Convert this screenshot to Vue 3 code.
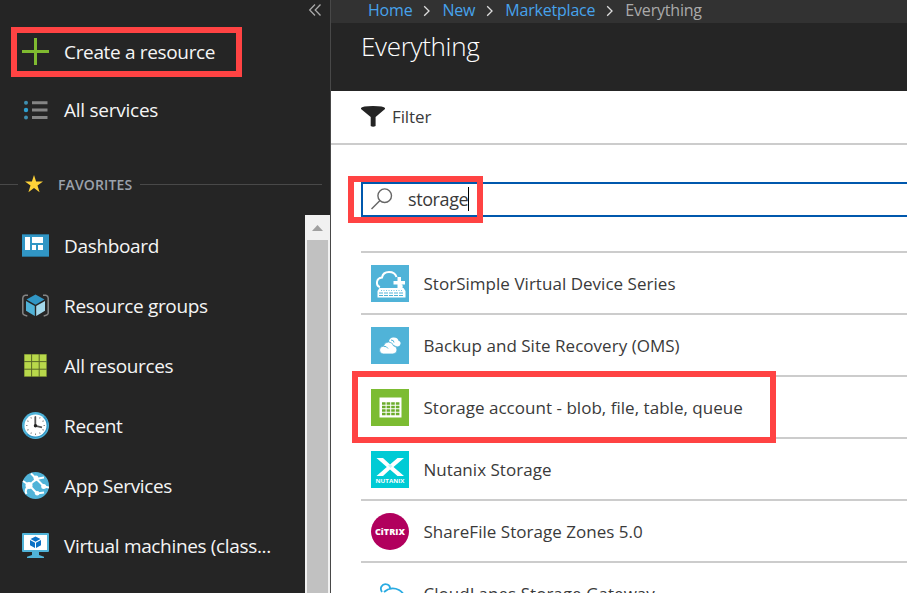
<script setup>
const favorites = [
  { id: 'dashboard', label: 'Dashboard' },
  { id: 'groups', label: 'Resource groups' },
  { id: 'resources', label: 'All resources' },
  { id: 'recent', label: 'Recent' },
  { id: 'apps', label: 'App Services' },
  { id: 'vm', label: 'Virtual machines (class...' },
]
const crumbs = ['Home', 'New', 'Marketplace']
const results = [
  { id: 'storsimple', label: 'StorSimple Virtual Device Series' },
  { id: 'backup', label: 'Backup and Site Recovery (OMS)' },
  { id: 'storage', label: 'Storage account - blob, file, table, queue', marked: true },
  { id: 'nutanix', label: 'Nutanix Storage' },
  { id: 'citrix', label: 'ShareFile Storage Zones 5.0' },
  { id: 'cloudlanes', label: 'CloudLanes Storage Gateway' },
]
const cells = [0, 1, 2, 3, 4, 5, 6, 7, 8]
const ticks = [0, 30, 60, 90, 120, 150, 180, 210, 240, 270, 300, 330]
</script>

<template>
  <div class="portal">
    <aside class="sidebar">
      <svg class="collapse" width="14" height="14" viewBox="0 0 14 14"><path d="M7 1.5 1.7 7 7 12.5M12.5 1.5 7.2 7l5.3 5.5" fill="none" stroke="#aaa" stroke-width="1.3" /></svg>
      <div class="nav-item create">
        <svg width="27" height="27" viewBox="0 0 27 27"><path d="M13.5 0v27M0 13.5h27" stroke="#7fba30" stroke-width="3" /></svg>
        <span>Create a resource</span>
        <i class="highlight"></i>
      </div>
      <div class="nav-item services">
        <svg width="27" height="20" viewBox="0 0 27 20">
          <g fill="#3f8fb0"><circle cx="4" cy="2.7" r="2" /><circle cx="4" cy="10" r="2.2" fill="#2fa0d0" /><circle cx="4" cy="17.4" r="2" /></g>
          <path d="M10 2.7h15.5M10 10h15.5M10 17.4h15.5" stroke="#858585" stroke-width="3" />
        </svg>
        <span>All services</span>
      </div>
      <div class="favorites">
        <i class="rule short"></i>
        <svg width="18" height="18" viewBox="0 0 18 18"><path d="M9 0l2.1 6.4H18l-5.5 4.1 2.1 6.7L9 13.1l-5.6 4.1 2.1-6.7L0 6.4h6.9z" fill="#ffd338" /></svg>
        <b>FAVORITES</b>
        <i class="rule"></i>
      </div>
      <div class="fav-area">
        <nav class="fav-list">
          <div v-for="f in favorites" :key="f.id" class="nav-item">
            <svg v-if="f.id === 'dashboard'" width="27" height="27" viewBox="0 0 27 27">
              <path d="M0 2h27v23H0z" fill="#3196c5" /><path d="M0 2.5h27M0 24.500h27" stroke="#286f91" />
              <path d="M3 5h5v13H3zM10 5h11v6H10zM10 13h4v5h-4zM16 13h5v5h-5z" fill="#fff" />
            </svg>
            <svg v-else-if="f.id === 'groups'" width="27" height="27" viewBox="0 0 27 27">
              <path d="M6 3.2H3.200Q.8 4 .8 6v15q0 2 4.500 3M21 3.200h2.800Q26.200 4 26.200 6v15q0 2-4.500 3" fill="none" stroke="#858585" stroke-width="1.500" />
              <path d="M13.500 2.500 22.500 7.600 13.500 12.700 4.500 7.600z" fill="#3196c5" /><path d="M4 9l8.800 5v10L4 18.800z" fill="#50b3d8" /><path d="M23 9l-8.800 5v10L23 18.800z" fill="#a3d8eb" />
            </svg>
            <svg v-else-if="f.id === 'resources'" width="27" height="27" viewBox="0 0 27 27">
              <path d="M2 2h23v23H2z" fill="#596827" />
              <rect v-for="c in cells" :key="c" :x="2.500 + (c % 3) * 7.600" :y="2.500 + Math.floor(c / 3) * 7.600" width="6.600" height="6.600" fill="#b8d84b" />
            </svg>
            <svg v-else-if="f.id === 'recent'" width="27" height="27" viewBox="0 0 27 27">
              <circle cx="13.500" cy="13.500" r="13.500" fill="#50b3d8" /><path d="M23 4a13.500 13.500 0 0 1-19 19z" fill="#3196c5" /><circle cx="13.500" cy="13.500" r="11" fill="#fff" />
              <path v-for="t in ticks" :key="t" d="M13.500 4v1.500" stroke="#888" stroke-width="1" :transform="`rotate(${t} 13.5 13.5)`" />
              <path d="M13.300 4.500v9.300l6.700 1.600" fill="none" stroke="#555" stroke-width="1.800" /><circle cx="13.500" cy="13.800" r="1.700" fill="#222" />
            </svg>
            <svg v-else-if="f.id === 'apps'" width="27" height="27" viewBox="0 0 27 27">
              <circle cx="13.500" cy="13.500" r="13.500" fill="#50b3d8" />
              <path d="M9 1.500 22 14.500M22 5.500Q13 6 7.500 13.500M7.500 13.500Q2 17 4.500 22M7.500 13.500 15 21.500 22 20.500M22 14.500l5 1M1 9l6.500 4.500" fill="none" stroke="#fff" stroke-width="2" />
              <circle cx="14" cy="6" r="2.500" fill="#fff" /><circle cx="7" cy="13.500" r="3.500" fill="#fff" /><circle cx="21.700" cy="14.500" r="2.500" fill="#fff" /><circle cx="15.200" cy="21.300" r="2.300" fill="#fff" />
            </svg>
            <svg v-else width="27" height="27" viewBox="0 0 27 27">
              <path d="M1 1h25q1 0 1 1v17q0 1-1 1H17v3l5 1.800V26H5v-1.200L10 23v-3H1q-1 0-1-1V2Q0 1 1 1z" fill="#50b3d8" /><path d="M2 3h23v15H2z" fill="#fff" />
              <path d="M13.500 4.500 18.500 7 13.500 9.700 8.500 7zM8 8l5 2.700V16l-5-2.700zM19 8l-5 2.700V16l5-2.700z" fill="#0d72c5" />
            </svg>
            <span>{{ f.label }}</span>
          </div>
        </nav>
        <div class="scrollbar">
          <svg width="25" height="25" viewBox="0 0 25 25"><path d="M12.500 10l5.500 6H7z" fill="#a0a0a0" /></svg>
          <div class="thumb"></div>
        </div>
      </div>
    </aside>

    <main class="blade">
      <div class="crumbs">
        <template v-for="c in crumbs" :key="c">
          <a>{{ c }}</a>
          <svg width="8" height="12" viewBox="0 0 8 12"><path d="M1.200 1.300 6 6 1.200 10.700" fill="none" stroke="#ddd" stroke-width="1.300" /></svg>
        </template>
        <span>Everything</span>
      </div>
      <header><h1>Everything</h1></header>
      <div class="toolbar">
        <svg width="24" height="21" viewBox="0 0 24 21"><path d="M0 2Q1 0 12 0t12 2v1L14.600 11v9Q12 21.500 9.700 20v-9L0 3z" fill="#242424" /></svg>
        <span>Filter</span>
      </div>
      <div class="search">
        <svg width="24" height="24" viewBox="0 0 24 24"><circle cx="14.700" cy="8.700" r="6.800" fill="none" stroke="#666" stroke-width="1.400" /><path d="M10 13.500 1.500 22" stroke="#666" stroke-width="1.500" /></svg>
        <span>storage</span><i class="caret"></i>
        <i class="highlight"></i>
      </div>
      <div class="results">
        <div v-for="r in results" :key="r.id" class="result">
          <svg v-if="r.id === 'storsimple'" width="38" height="37" viewBox="0 0 38 37">
            <path d="M0 0h38v37H0z" fill="#50b3d8" />
            <path d="M9 22Q5.500 21 6 17q.5-4 5-4.500Q12 7 18 7q6 0 7.500 5M30 19.500q2 3-1 4.500" fill="none" stroke="#fff" stroke-width="2" />
            <path d="M26.500 12h3.500v4h4v3.500h-4v4h-3.500v-4h-4V16h4z" fill="#fff" /><path d="M8.500 23h24l2 3v6.500h-28V26z" fill="#fff" />
            <path d="M8 28h25M8 30.500h25" stroke="#50b3d8" stroke-width="1" stroke-dasharray="4 1" /><path d="M10 25.500h21" stroke="#50b3d8" stroke-width=".8" stroke-dasharray="1 1.500" />
          </svg>
          <svg v-else-if="r.id === 'backup'" width="38" height="37" viewBox="0 0 38 37">
            <path d="M0 0h38v37H0z" fill="#50b3d8" />
            <path d="M18 14q1-4 5-3.500 3.500 0 4.500 3.200 2.500.8 2 3.300-.7 2.700-3.500 2.500L20 17z" fill="#fff" />
            <path d="M12 27q-3.500-.5-3.500-4t4-4q1-4 5-4t5.200 4q3.300 0 3.300 4 0 3.500-4 4z" fill="#fff" stroke="#50b3d8" stroke-width=".8" />
            <path d="M12.500 19.500q3-.8 4.500 2M20 13q3 0 3 2.500" fill="none" stroke="#50b3d8" />
          </svg>
          <svg v-else-if="r.id === 'storage'" width="38" height="37" viewBox="0 0 38 37">
            <path d="M0 0h38v37H0z" fill="#7cbc32" /><path d="M8.500 8.500h22v20h-22z" fill="#fff" />
            <path d="M11 14.500h18M11 18h18M11 21.500h18M11 25h18" stroke="#6cac2b" stroke-width="2.500" stroke-dasharray="3.600 1" />
          </svg>
          <svg v-else-if="r.id === 'nutanix'" width="38" height="37" viewBox="0 0 38 37">
            <path d="M0 0h38v37H0z" fill="#00cbd5" />
            <path d="M5.500 7h6.500L19 13.500 26.500 7H33L22.500 16 33 25h-6.500L19 18.500 12 25H5.500L15.800 16z" fill="#fff" />
            <path d="M17 14.500l2-1.500 2.500 2-2 2z" fill="#c9f5f7" />
            <text x="19" y="31.500" text-anchor="middle" textLength="29" lengthAdjust="spacingAndGlyphs" class="nutanix-text">NUTANIX</text>
          </svg>
          <svg v-else-if="r.id === 'citrix'" width="38" height="37" viewBox="0 0 38 37">
            <ellipse cx="19" cy="18.500" rx="19" ry="18.500" fill="#b1005d" />
            <text x="19" y="21.700" text-anchor="middle" textLength="30" lengthAdjust="spacingAndGlyphs" class="citrix-text">CiTRIX</text>
          </svg>
          <svg v-else width="38" height="37" viewBox="0 0 38 37">
            <path d="M11 17q-2-3-.5-5.500 2-3.500 6-2 3 1.300 2.500 5M13 17q7-6 15-2 7 4 5 12" fill="none" stroke="#29abe2" stroke-width="1.800" />
          </svg>
          <span>{{ r.label }}</span>
          <i v-if="r.marked" class="highlight"></i>
        </div>
      </div>
    </main>
  </div>
</template>

<style>
body { margin: 0; overflow: hidden; }
</style>

<style scoped>
.portal { display: flex; width: 907px; height: 593px; overflow: hidden; font-family: "Open Sans", "Noto Sans", sans-serif; background: #fff; }
.portal * { box-sizing: border-box; }
svg { display: block; flex: none; }
.sidebar { display: flex; flex-direction: column; flex: none; width: 331px; background: #252525; border-right: 1px solid #484848; color: #f5f5f5; }
.collapse { margin: 3px 0 0 308px; }
.nav-item { display: flex; align-items: center; gap: 15px; height: 60px; padding-left: 22px; font-size: 19px; letter-spacing: -0.34px; white-space: nowrap; }
.nav-item span { padding-top: 2px; }
.highlight { position: absolute; border: 6px solid #ff4343; }
.create { position: relative; margin-top: 10px; height: 48px; }
.create .highlight { left: 11px; top: 0; width: 231px; height: 50px; }
.services { margin-top: 5px; }
.services span { padding-top: 0; letter-spacing: -0.25px; }
.favorites { display: flex; align-items: center; height: 22px; margin-top: 33px; }
.favorites b { margin: 0 8px 0 15px; color: #9ba1ab; font-size: 14px; font-weight: 600; letter-spacing: 0.13px; }
.rule { flex: none; width: 182px; height: 1px; background: #494949; }
.rule.short { width: 18px; margin-right: 7px; }
.fav-area { display: flex; flex: 1; min-height: 0; margin-top: 20px; }
.fav-list { flex: 1; }
.scrollbar { display: flex; flex-direction: column; width: 25px; background: #f1f1f1; }
.thumb { flex: 1; margin: 0 2px; background: #c1c1c1; }
.blade { flex: 1; min-width: 0; background: #fff; color: #3a3a3a; }
.crumbs { display: flex; align-items: center; height: 23px; padding: 0 0 2px 37px; gap: 11px; background: #323232; color: #aaa; font-size: 16px; line-height: 21px; letter-spacing: -0.2px; }
.crumbs a { color: #47a3ec; }
header { height: 68px; padding: 3px 0 0 30px; background: #252525; }
h1 { margin: 0; color: #fff; font-size: 26px; font-weight: 300; line-height: 40px; letter-spacing: -0.3px; }
.toolbar { display: flex; align-items: center; gap: 7px; height: 54px; padding: 0 0 1px 30px; border-bottom: 2px solid #ccc; font-size: 17px; }
.toolbar span { letter-spacing: -0.1px; }
.search { position: relative; display: flex; align-items: center; height: 35px; margin: 37px 0 0 30px; padding: 0 0 2px 7px; border: 2px solid #0058ad; border-right: 0; font-size: 18px; letter-spacing: -0.4px; }
.search span { margin-left: 14px; }
.caret { width: 1px; height: 24px; background: #000; }
.search .highlight { left: -15px; top: -8px; width: 135px; height: 47px; }
.results { margin: 34px 0 0 30px; }
.result { position: relative; display: flex; align-items: center; gap: 14.500px; height: 62px; padding: 1px 0 0 10px; border-top: 2px solid #ccc; font-size: 17px; letter-spacing: 0.03px; white-space: nowrap; }
.result .highlight { z-index: 1; left: -9px; top: -6px; width: 424px; height: 72px; }
.nutanix-text { font: 700 6px "Open Sans", sans-serif; fill: #fff; }
.citrix-text { font: 800 8.500px "Open Sans", sans-serif; fill: #fff; }
</style>
